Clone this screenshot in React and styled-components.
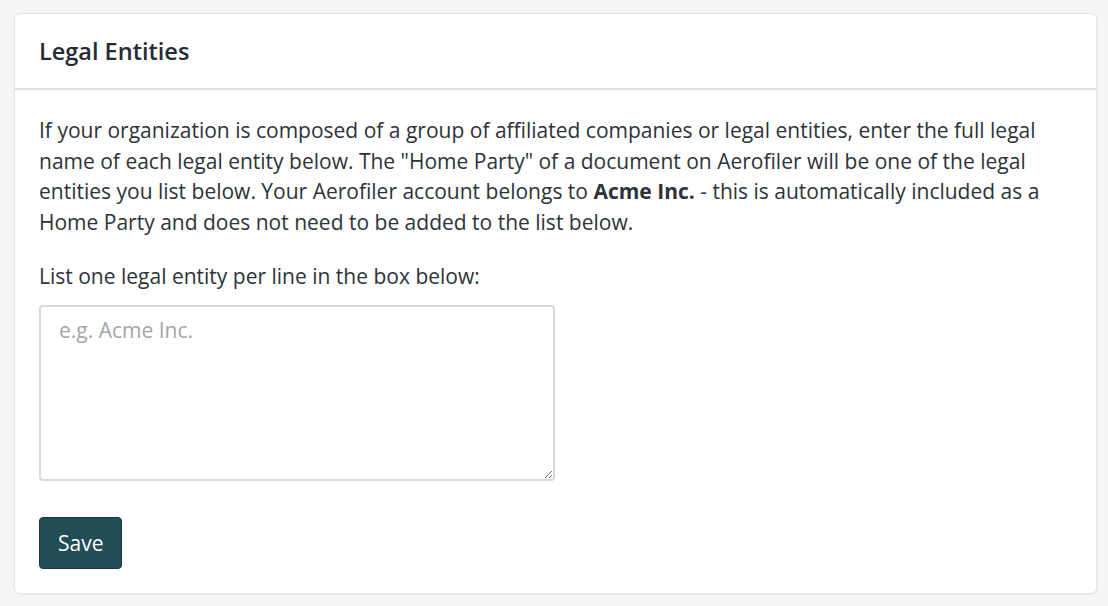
import React from "react";
import styled, { createGlobalStyle } from "styled-components";

const Global = createGlobalStyle`
  html, body { margin: 0; padding: 0; background: #f5f5f5; }
  body { font-family: "Open Sans", "Noto Sans", sans-serif; color: #333; }
  * { box-sizing: border-box; }
`;

const Page = styled.div`
  padding: 13px 11px 12px 14px;
`;

const Card = styled.section`
  background: #fff;
  border: 1px solid #e4e4e4;
  border-radius: 6px;
  box-shadow: 0 1px 3px rgba(0,0,0,0.06);
`;

const Header = styled.header`
  height: 76px;
  display: flex;
  align-items: center;
  padding: 0 24px;
  border-bottom: 2px solid #e2e2e2;
`;

const Title = styled.h2`
  margin: 0;
  font-size: 23.5px;
  font-weight: 600;
  color: #262a33;
`;

const Body = styled.div`
  display: flex;
  flex-direction: column;
  align-items: flex-start;
  padding: 25px 24px 24px;
`;

const Text = styled.p`
  margin: 0 0 ${(p) => p.$gap || 0}px;
  font-size: 21px;
  line-height: 30.6px;
  color: #2d333a;
`;

const Area = styled.textarea`
  width: 516px;
  height: 176px;
  margin-top: 13px;
  padding: 10px 18px;
  border: 2px solid #d9d9d9;
  border-radius: 4px;
  font-family: inherit;
  font-size: 21px;
  line-height: 1.3;
  color: #333;
  outline: none;
  &::placeholder { color: #a3a6a8; }
`;

const Button = styled.button`
  margin-top: 36px;
  height: 52px;
  padding: 0 18px;
  background: #234d56;
  border: 1px solid #163840;
  border-radius: 4px;
  color: #fff;
  font-family: inherit;
  font-size: 21px;
  cursor: pointer;
`;

export default function App() {
  return (
    <>
      <Global />
      <Page>
        <Card>
          <Header>
            <Title>Legal Entities</Title>
          </Header>
          <Body>
            <Text $gap={24}>
              If your organization is composed of a group of affiliated companies or legal entities, enter the full legal
              name of each legal entity below. The "Home Party" of a document on Aerofiler will be one of the legal
              entities you list below. Your Aerofiler account belongs to <b>Acme Inc.</b> - this is automatically included as a
              Home Party and does not need to be added to the list below.
            </Text>
            <Text>List one legal entity per line in the box below:</Text>
            <Area placeholder="e.g. Acme Inc." />
            <Button>Save</Button>
          </Body>
        </Card>
      </Page>
    </>
  );
}
